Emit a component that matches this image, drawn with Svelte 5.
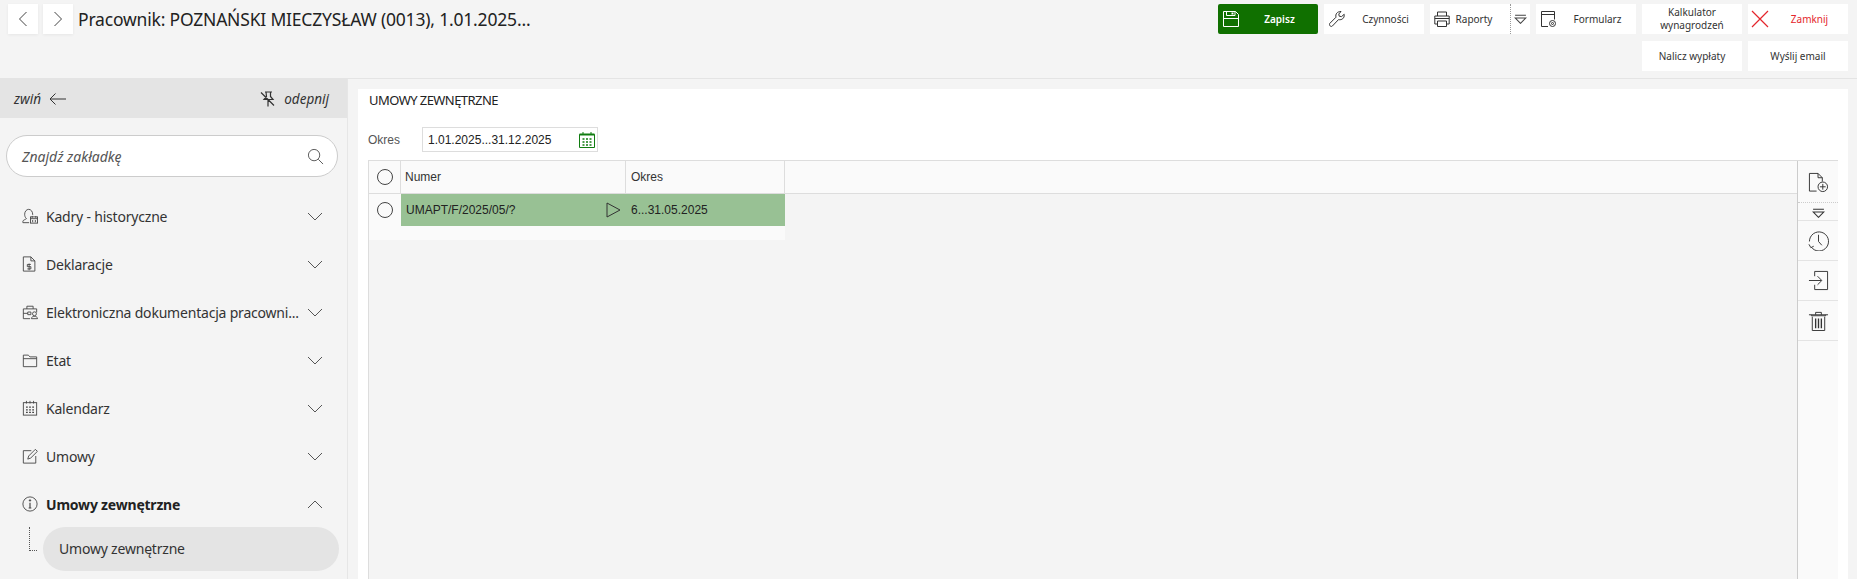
<script lang="ts">
  const tabs = [
    { label: "Kadry - historyczne", icon: "kadry" },
    { label: "Deklaracje", icon: "dekl" },
    { label: "Elektroniczna dokumentacja pracowni...", icon: "teczka" },
    { label: "Etat", icon: "folder" },
    { label: "Kalendarz", icon: "kal" },
    { label: "Umowy", icon: "umowy" },
    { label: "Umowy zewnętrzne", icon: "info", open: true },
  ];
</script>

{#snippet tabIcon(name)}
  <svg class="tab-icon" viewBox="0 0 18 18" fill="none" stroke="#444" stroke-width="1">
    {#if name === "kadry"}
      <path d="M1 16.500v-1.500c0-1.500 3-2 4-3-1.500-1.500-2-3-2-5 0-3 2-5.500 4.500-5.500s4.500 2.500 4.500 5.500v1" />
      <path d="M1 16.500h7" />
      <rect x="9.500" y="10" width="8" height="7" />
      <path d="M9.500 12h8M12 13.500v2.500M15 13.500v2.500M11.500 9v2M15.500 9v2" />
    {:else if name === "dekl"}
      <path d="M1.500 1h8.500l4.500 4.500V17h-13zM10 1v4.500h4.500" />
      <path d="M10 9.500H6v2.500h4v2.500H6M8 8.500v7.500" />
    {:else if name === "teczka"}
      <path d="M9 16.500H1.500v-11h15v4" />
      <path d="M5.500 5.500v-3h7v3M1.500 10.500h5M6.500 9h3.500v3h-3.500z" />
      <circle cx="14" cy="11" r="2.200" />
      <path d="M10.500 16.500c0-2 2-2.500 3.500-2.500s3.500.5 3.500 2.500z" />
    {:else if name === "folder"}
      <path d="M1.500 16.500v-13h5.500l2 2h7.500v11zM1.500 7.500h15" />
    {:else if name === "kal"}
      <rect x="1.500" y="3" width="15" height="14" />
      <path d="M5 1v3M9 1v3M13 1v3" />
      <path d="M4.500 8h2M8 8h2M11.500 8h2M4.500 11h2M8 11h2M11.500 11h2M4.500 14h2M8 14h2M11.500 14h2" stroke-width="1.400" />
    {:else if name === "umowy"}
      <path d="M15.500 9v8h-14v-14h9" />
      <path d="M6.500 12.500l1-3.500 7.500-7.500 2.300 2.300-7.500 7.500z" />
    {:else}
      <circle cx="9" cy="9" r="8" />
      <path d="M9 7.500v6M7.500 13.500h3" stroke-width="1.300" />
      <circle cx="9" cy="5" r=".8" fill="#444" />
    {/if}
  </svg>
{/snippet}

{#snippet chevron(up)}
  <svg class="chev" viewBox="0 0 16 9" fill="none" stroke="#555" stroke-width="1">
    <path d={up ? "M1 8l7-7 7 7" : "M1 1l7 7 7-7"} />
  </svg>
{/snippet}

<div class="page">
  <header class="topbar">
    <div class="nav">
      <button class="nav-btn" aria-label="poprzedni">
        <svg viewBox="0 0 10 16" fill="none" stroke="#444"><path d="M8.500 1L1.500 8l7 7" /></svg>
      </button>
      <button class="nav-btn" aria-label="następny">
        <svg viewBox="0 0 10 16" fill="none" stroke="#444"><path d="M1.500 1l7 7-7 7" /></svg>
      </button>
      <h1>Pracownik: POZNAŃSKI MIECZYSŁAW (0013), 1.01.2025...</h1>
    </div>
    <div class="actions">
      <button class="act primary">
        <svg class="act-icon" viewBox="0 0 16 16" fill="none" stroke="#fff"><path d="M.5.5h12l3 3v12H.5zM.5 7.500h15M3.500.5v4h8.500v-4" /><path d="M9.500 1.500v2" stroke-width="2" /></svg>
        <span>Zapisz</span>
      </button>
      <button class="act">
        <svg class="act-icon" viewBox="0 0 16 16" fill="none" stroke="#333"><path d="M.7 12.500l6.300-6.300c-.8-3 1-5.700 5-5.700L9.800 3l.4 2.200 2.300.4 2.700-2.300c.5 4-2.500 6-5.700 5.300l-6.200 6.500c-1.300 1.200-3.600-.8-2.600-2.600z" /></svg>
        <span>Czynności</span>
      </button>
      <div class="act split">
        <svg class="act-icon" viewBox="0 0 16 16" fill="none" stroke="#333"><path d="M3.500 5V1h9v4M3.500 13H.8V5h14.400v8h-2.700M3.500 10h9v5.500h-9zM.8 7.500h14.400" /></svg>
        <span class="split-label">Raporty</span>
        <span class="split-arrow">
          <svg viewBox="0 0 12 9" fill="none" stroke="#444"><path d="M1 3.500h10L6 8.500zM1 1h10" /></svg>
        </span>
      </div>
      <button class="act">
        <svg class="act-icon" viewBox="0 0 16 16" fill="none" stroke="#333"><path d="M7 15.500H.5V.5h13v8M.5 3.500h13" /><circle cx="11.500" cy="12.500" r="3" /><circle cx="11.500" cy="12.500" r="1" /></svg>
        <span>Formularz</span>
      </button>
      <button class="act plain"><span>Kalkulator<br />wynagrodzeń</span></button>
      <button class="act close">
        <svg class="act-icon" viewBox="0 0 18 18" fill="none" stroke="#e4262c" stroke-width="1.200"><path d="M1 1l16 16M17 1L1 17" /></svg>
        <span>Zamknij</span>
      </button>
      <button class="act plain second"><span>Nalicz wypłaty</span></button>
      <button class="act plain"><span>Wyślij email</span></button>
    </div>
  </header>

  <div class="layout">
    <aside class="sidebar">
      <div class="side-head">
        <span class="collapse">
          zwiń
          <svg viewBox="0 0 18 12" fill="none" stroke="#333"><path d="M17 6H1M6.500.5L1 6l5.500 5.500" /></svg>
        </span>
        <span class="unpin">
          <svg viewBox="0 0 16 16" fill="none" stroke="#333" stroke-width="1.200"><path d="M5 1h7M6 1l.5 4.500L4 8.500h9l-2.500-3L10.500 1M8 8.500V15.500M1 1.500l13 13" /></svg>
          odepnij
        </span>
      </div>
      <div class="search">
        <span>Znajdź zakładkę</span>
        <svg viewBox="0 0 18 18" fill="none" stroke="#555"><circle cx="7.500" cy="7.500" r="6" /><path d="M12 12l5 5" /></svg>
      </div>
      <nav class="tabs">
        {#each tabs as tab}
          <div class="tab" class:active={tab.open}>
            {@render tabIcon(tab.icon)}
            <span class="tab-label">{tab.label}</span>
            {@render chevron(tab.open)}
          </div>
        {/each}
        <div class="sub">
          <span class="tree"></span>
          <div class="sub-item">Umowy zewnętrzne</div>
        </div>
      </nav>
    </aside>

    <main class="panel">
      <h2>UMOWY ZEWNĘTRZNE</h2>
      <div class="filter">
        <label for="okres">Okres</label>
        <div class="date" id="okres">
          <span>1.01.2025...31.12.2025</span>
          <svg viewBox="0 0 16 16" fill="none" stroke="#107c10"><path d="M.5 2.500h15v13H.5z" /><path d="M.5 2.500h15" stroke-width="2" /><path d="M4 0v3M12 0v3" /><path d="M3.500 7h2M7 7h2M10.500 7h2M3.500 10h2M7 10h2M10.500 10h2M3.500 13h2M7 13h2M10.500 13h2" stroke-width="1.300" /></svg>
        </div>
      </div>
      <div class="grid-wrap">
        <div class="grid">
          <div class="g-head">
            <div class="c-check"><span class="radio"></span></div>
            <div class="c-num">Numer</div>
            <div class="c-okres">Okres</div>
          </div>
          <div class="g-row">
            <div class="c-check"><span class="radio"></span></div>
            <div class="c-num">
              <span>UMAPT/F/2025/05/?</span>
              <svg viewBox="0 0 15 16" fill="none" stroke="#333"><path d="M1 1l13 7-13 7z" /></svg>
            </div>
            <div class="c-okres">6...31.05.2025</div>
          </div>
          <div class="g-blank"></div>
        </div>
        <div class="tools">
          <div class="tool double">
            <svg class="tool-icon" viewBox="0 0 22 22" fill="none" stroke="#333"><path d="M9 20H1.500V1.500h9l4.500 4.500v4M10.500 1.500V6H15" /><circle cx="15.500" cy="15.500" r="5" /><path d="M15.500 12.500v6M12.500 15.500h6" /></svg>
            <span class="tool-sep"></span>
            <svg class="tool-arrow" viewBox="0 0 12 9" fill="none" stroke="#333"><path d="M1 3.500h10L6 8.500zM1 1h10" /></svg>
          </div>
          <div class="tool">
            <svg class="tool-icon" viewBox="0 0 22 22" fill="none" stroke="#333"><path d="M3.500 18a10 10 0 1 0-2-6" /><path d="M1 15l2 3.500 3-1.500M11 5v7l3.500 4" /></svg>
          </div>
          <div class="tool">
            <svg class="tool-icon" viewBox="0 0 22 22" fill="none" stroke="#333"><path d="M7 6.500V1.500h13.500v19H7v-5M1 11h13M10 6.500l4.500 4.500-4.500 4.500" /></svg>
          </div>
          <div class="tool">
            <svg class="tool-icon" viewBox="0 0 22 22" fill="none" stroke="#333"><path d="M1 5h20M8 5V2.500h6V5M3.500 5v1h15V5M4.500 7v14.500h13V7" /><path d="M8 9v10M11 9v10M14 9v10" stroke-width="1.400" /></svg>
          </div>
        </div>
      </div>
    </main>
  </div>
</div>

<style>
  :global(body) {
    background: #f4f4f4;
  }

  .page {
    height: 579px;
    overflow: hidden;
    display: flex;
    flex-direction: column;
    font-family: "Noto Sans", sans-serif;
    color: #333;
  }

  button {
    font: inherit;
    color: inherit;
    border: 0;
    padding: 0;
    background: #fff;
  }

  .topbar {
    height: 79px;
    flex: none;
    box-sizing: border-box;
    display: flex;
    justify-content: space-between;
    padding: 4px 9px 0 8px;
    border-bottom: 1px solid #e4e4e4;
  }

  .nav {
    display: flex;
    align-items: flex-start;
    gap: 5px;
  }

  .nav-btn {
    width: 30px;
    height: 30px;
    display: flex;
    align-items: center;
    justify-content: center;
    box-shadow: 0 1px 3px rgba(0, 0, 0, 0.06);
  }

  .nav-btn svg {
    width: 10px;
    height: 16px;
  }

  h1 {
    margin: 0;
    font-size: 17.5px;
    line-height: 30px;
    font-weight: 400;
    color: #222;
    letter-spacing: -0.19px;
    white-space: nowrap;
  }

  .actions {
    display: grid;
    grid-template-columns: repeat(6, 100px);
    grid-auto-rows: 30px;
    gap: 7px 6px;
  }

  .act {
    display: flex;
    align-items: center;
    justify-content: center;
    position: relative;
    font-size: 10px;
    line-height: 13px;
    text-align: center;
    background: #fff;
    color: #333;
  }

  .act-icon {
    position: absolute;
    left: 5px;
    top: 7px;
    width: 16px;
    height: 16px;
  }

  .act span {
    padding-left: 23px;
  }

  .act.plain span {
    padding-left: 0;
  }

  .primary {
    background: #107000;
    color: #fff;
    font-weight: 600;
    border-radius: 2px;
  }

  .close span {
    color: #e4262c;
  }

  .close .act-icon {
    left: 3px;
    top: 6px;
    width: 18px;
    height: 18px;
  }

  .second {
    grid-column: 5;
  }

  .split .split-label {
    padding: 0 12px 0 0;
  }

  .split .act-icon {
    left: 4px;
  }

  .split-arrow {
    position: absolute;
    right: 0;
    top: 0;
    bottom: 0;
    width: 20px;
    box-sizing: border-box;
    padding: 0 !important;
    border-left: 1px dotted #999;
    display: flex;
    align-items: center;
    justify-content: center;
  }

  .split-arrow svg {
    width: 13px;
    height: 10px;
  }

  .layout {
    flex: 1;
    display: flex;
    min-height: 0;
  }

  .sidebar {
    width: 348px;
    flex: none;
    box-sizing: border-box;
    border-right: 1px solid #e6e6e6;
  }

  .side-head {
    height: 39px;
    background: #e4e4e4;
    display: flex;
    align-items: center;
    justify-content: space-between;
    padding: 0 18px 0 14px;
    font-size: 13.5px;
    font-style: italic;
    color: #333;
  }

  .collapse,
  .unpin {
    display: flex;
    align-items: center;
    gap: 8px;
  }

  .collapse svg {
    width: 18px;
    height: 12px;
  }

  .unpin svg {
    width: 16px;
    height: 16px;
  }

  .search {
    margin: 17px 9px 0 6px;
    height: 42px;
    box-sizing: border-box;
    border: 1px solid #ccc;
    border-radius: 22px;
    background: #fff;
    display: flex;
    align-items: center;
    justify-content: space-between;
    padding: 0 13px 0 15px;
    font-size: 14px;
    font-style: italic;
    color: #555;
  }

  .search svg {
    width: 17px;
    height: 17px;
  }

  .tabs {
    margin-top: 15px;
  }

  .tab {
    height: 48px;
    display: flex;
    align-items: center;
    padding: 0 24px 0 22px;
    font-size: 14px;
    color: #333;
  }

  .tab-icon {
    width: 16px;
    height: 16px;
    flex: none;
    margin-right: 8px;
  }

  .tab-label {
    flex: 1;
    white-space: nowrap;
    overflow: hidden;
    letter-spacing: -0.2px;
  }

  .chev {
    width: 16px;
    height: 9px;
    flex: none;
    margin-left: 8px;
  }

  .active {
    font-weight: 700;
    color: #222;
  }

  .sub {
    display: flex;
    margin-top: -1px;
    padding-left: 29px;
  }

  .tree {
    width: 7px;
    height: 23px;
    border-left: 1px dotted #555;
    border-bottom: 1px dotted #555;
    flex: none;
  }

  .sub-item {
    margin-left: 6px;
    width: 296px;
    height: 44px;
    line-height: 44px;
    box-sizing: border-box;
    padding-left: 16px;
    border-radius: 22px;
    background: #e4e4e4;
    font-size: 14px;
    letter-spacing: -0.2px;
  }

  .panel {
    margin: 10px 9px 0 10px;
    flex: 1;
    min-width: 0;
    display: flex;
    flex-direction: column;
    background: #fff;
    padding: 0 10px;
  }

  h2 {
    margin: 0;
    height: 24px;
    padding-left: 1px;
    line-height: 23px;
    font-size: 13px;
    font-weight: 400;
    color: #222;
    letter-spacing: -0.56px;
  }

  .filter {
    margin-top: 14px;
    height: 25px;
    display: flex;
    align-items: center;
    font-family: "Liberation Sans", Arial, sans-serif;
    font-size: 12px;
  }

  .filter label {
    width: 54px;
    color: #555;
  }

  .date {
    width: 176px;
    height: 25px;
    box-sizing: border-box;
    border: 1px solid #ddd;
    display: flex;
    align-items: center;
    justify-content: space-between;
    padding: 0 2px 0 5px;
    color: #222;
  }

  .date svg {
    width: 16px;
    height: 16px;
  }

  .grid-wrap {
    margin-top: 8px;
    flex: 1;
    display: flex;
    border-top: 1px solid #ddd;
    border-left: 1px solid #ddd;
    font-family: "Liberation Sans", Arial, sans-serif;
    font-size: 12px;
    color: #333;
    background: #f4f4f4;
  }

  .grid {
    flex: 1;
  }

  .g-head {
    height: 32px;
    box-sizing: content-box;
    display: flex;
    background: #fafafa;
    border-bottom: 1px solid #ddd;
  }

  .g-row {
    height: 32px;
    display: flex;
    width: 416px;
    background: #fafafa;
  }

  .g-blank {
    width: 416px;
    height: 14px;
    background: #fafafa;
  }

  .c-check {
    width: 32px;
    flex: none;
    box-sizing: border-box;
    display: flex;
    align-items: center;
    justify-content: center;
  }

  .radio {
    width: 14px;
    height: 14px;
    border: 1px solid #444;
    border-radius: 50%;
  }

  .c-num {
    width: 225px;
    flex: none;
    box-sizing: border-box;
    display: flex;
    align-items: center;
    justify-content: space-between;
    padding: 0 4px;
  }

  .c-okres {
    width: 159px;
    flex: none;
    box-sizing: border-box;
    display: flex;
    align-items: center;
    padding: 0 5px;
  }

  .g-head .c-check,
  .g-head .c-num,
  .g-head .c-okres {
    border-right: 1px solid #ddd;
  }

  .g-row .c-num,
  .g-row .c-okres {
    background: #98c194;
    color: #222;
  }

  .g-row .c-num {
    padding-left: 5px;
  }

  .g-row .c-num svg {
    width: 15px;
    height: 16px;
    margin-right: 1px;
  }

  .tools {
    width: 41px;
    flex: none;
    box-sizing: border-box;
    background: #fafafa;
    border-left: 1px solid #ccc;
  }

  .tool {
    height: 40px;
    box-sizing: border-box;
    border-bottom: 1px solid #e4e4e4;
    display: flex;
    align-items: center;
    justify-content: center;
  }

  .tool.double {
    height: 60px;
    flex-direction: column;
    justify-content: flex-start;
    padding-top: 11px;
  }

  .tool-icon {
    width: 21px;
    height: 21px;
    flex: none;
  }

  .tool-sep {
    align-self: stretch;
    border-top: 1px dotted #ccc;
    margin-top: 9px;
  }

  .tool-arrow {
    width: 13px;
    height: 10px;
    margin-top: 5px;
  }
</style>
